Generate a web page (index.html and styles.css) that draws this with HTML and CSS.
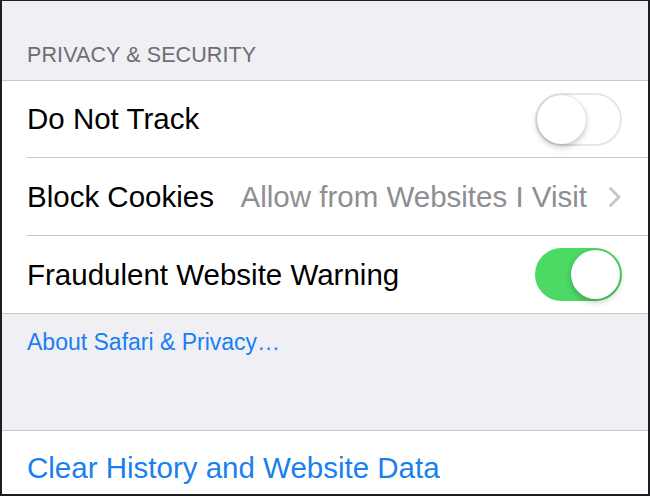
FILE: index.html
```html
<!DOCTYPE html>
<html>
<head>
<meta charset="utf-8">
<link rel="stylesheet" href="styles.css">
</head>
<body>
<div class="frame">
  <div class="section-header">PRIVACY &amp; SECURITY</div>
  <div class="group">
    <div class="row first">
      <span class="label">Do Not Track</span>
      <span class="toggle"><span class="knob"></span></span>
    </div>
    <div class="row">
      <span class="label">Block Cookies</span>
      <span class="value">Allow from Websites I Visit</span>
      <svg class="chevron" width="14" height="22" viewBox="0 0 14 22"><path d="M2.5 2.5 L11 11 L2.5 19.5" fill="none" stroke="#c7c7cc" stroke-width="3" stroke-linecap="round" stroke-linejoin="round"/></svg>
    </div>
    <div class="row last">
      <span class="label">Fraudulent Website Warning</span>
      <span class="toggle on"><span class="knob"></span></span>
    </div>
  </div>
  <div class="section-footer">
    <span class="link-small">About Safari &amp; Privacy…</span>
  </div>
  <div class="group bottom">
    <div class="row action">
      <span class="link">Clear History and Website Data</span>
    </div>
  </div>
</div>
</body>
</html>
```
FILE: styles.css
```css
html, body {
  margin: 0;
  padding: 0;
}
body {
  width: 650px;
  height: 496px;
  overflow: hidden;
  font-family: "Liberation Sans", Arial, sans-serif;
}
.frame {
  box-sizing: border-box;
  width: 650px;
  height: 496px;
  border-top: 1px solid #1e1e22;
  border-left: 2px solid #1e1e22;
  border-right: 2px solid #1e1e22;
  border-bottom: 2px solid #1e1e22;
  background: #efeff4;
  display: flex;
  flex-direction: column;
  overflow: hidden;
}
.section-header {
  height: 79px;
  flex: none;
  box-sizing: border-box;
  display: flex;
  align-items: flex-end;
  padding: 0 0 14px 25px;
  font-size: 21.5px;
  line-height: 1;
  color: #6d6d72;
  letter-spacing: 0.1px;
}
.group {
  flex: none;
  background: #fff;
  border-top: 1px solid #c8c7cc;
  border-bottom: 1px solid #c8c7cc;
  padding-left: 25px;
}
.group.bottom {
  border-bottom: none;
  flex: 1;
}
.row {
  height: 77px;
  display: flex;
  align-items: center;
  padding-right: 26px;
  border-bottom: 1px solid #c8c7cc;
}
.row.first {
  height: 76px;
}
.row.last {
  border-bottom: none;
}
.row.action {
  border-bottom: none;
  height: auto;
  display: block;
  padding-top: 20px;
}
.label {
  font-size: 29.5px;
  color: #000;
  flex: 1;
  white-space: nowrap;
}
.value {
  font-size: 29.5px;
  color: #8e8e93;
  white-space: nowrap;
  margin-right: 21px;
}
.chevron {
  display: block;
  flex: none;
}
.toggle {
  flex: none;
  box-sizing: border-box;
  width: 87px;
  height: 53px;
  border-radius: 27px;
  border: 2px solid #e5e5ea;
  background: #fff;
  position: relative;
}
.toggle .knob {
  position: absolute;
  top: 0;
  left: 0;
  width: 49px;
  height: 49px;
  border-radius: 50%;
  background: #fff;
  box-shadow: 0 3px 6px rgba(0,0,0,0.22), 0 0 1px rgba(0,0,0,0.25);
}
.toggle.on {
  background: #4cd964;
  border-color: #4cd964;
}
.toggle.on .knob {
  left: auto;
  right: 0;
}
.section-footer {
  flex: none;
  height: 116px;
  box-sizing: border-box;
  padding: 15px 0 0 25px;
}
.link-small {
  font-size: 23px;
  color: #1a7ff0;
  white-space: nowrap;
}
.link {
  font-size: 29.5px;
  color: #1a7ff0;
  white-space: nowrap;
}
```
